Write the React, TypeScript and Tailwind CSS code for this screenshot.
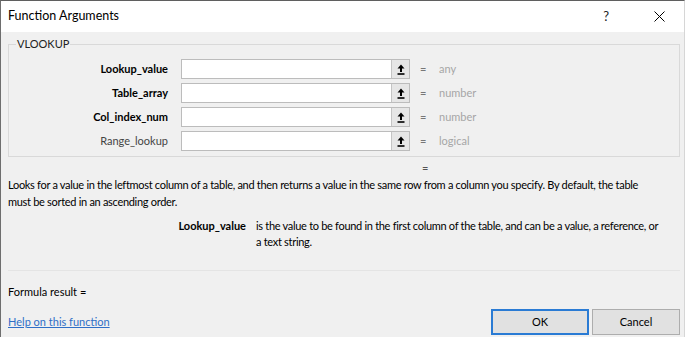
import { useState } from "react";

const args = [
  { name: "Lookup_value", type: "any", bold: true },
  { name: "Table_array", type: "number", bold: true },
  { name: "Col_index_num", type: "number", bold: true },
  { name: "Range_lookup", type: "logical", bold: false },
];

const RefIcon = () => (
  <svg width="8" height="11" viewBox="0 0 8 11">
    <path d="M4 0.5 L7.5 4.5 H5 V8 H3 V4.5 H0.5 Z" fill="#000" />
    <rect x="0.5" y="9.2" width="7" height="1.6" fill="#000" />
  </svg>
);

const ArgRow = ({ name, type, bold }: { name: string; type: string; bold: boolean }) => {
  const [value, setValue] = useState("");
  return (
    <div className="flex items-center h-[20px] mb-[4px]">
      <div
        className={`w-[159px] text-right ${bold ? "font-bold text-black" : "text-[#444]"}`}
      >
        {name}
      </div>
      <div className="ml-[13px] w-[229px] h-[20px] flex bg-white border border-[#bcbcbc]">
        <input
          value={value}
          onChange={(e) => setValue(e.target.value)}
          className="flex-1 min-w-0 outline-none px-1 text-[11px]"
        />
        <button className="w-[18px] h-full flex items-center justify-center bg-[#e6e6e6] border-l border-[#c4c4c4]">
          <RefIcon />
        </button>
      </div>
      <div className="ml-[10px] w-[7px] text-[#777]">=</div>
      <div className="ml-[12px] text-[#a6a6a6]">{type}</div>
    </div>
  );
};

export default function App() {
  return (
    <div
      className="w-[685px] h-[337px] flex flex-col bg-[#f0f0f0] border-t border-l border-r border-t-[#5f5f5f] border-l-[#6e6e6e] border-r-[#d6d6d6] text-[11px] text-black overflow-hidden"
      style={{ fontFamily: "Lato, 'Liberation Sans', sans-serif" }}
    >
      {/* title bar */}
      <div className="h-[31px] bg-white flex items-center pl-[7px] shrink-0">
        <span className="text-[12.5px]">Function Arguments</span>
        <span className="ml-auto mr-[45px] text-[13px] text-[#222]">?</span>
        <svg width="11" height="11" viewBox="0 0 11 11" className="mr-[19px]">
          <path d="M0.5 0.5 L10.5 10.5 M10.5 0.5 L0.5 10.5" stroke="#000" strokeWidth="1" />
        </svg>
      </div>

      <div className="flex-1 flex flex-col pl-[7px] pr-[2px]">
        <fieldset className="mt-[5px] border border-[#d9d9d9] pl-0 pb-[1px] mr-[2px]">
          <legend className="ml-[7px] px-[1px] leading-[14px] text-[#222]">VLOOKUP</legend>
          <div className="pt-[8px]">
            {args.map((a) => (
              <ArgRow key={a.name} {...a} />
            ))}
          </div>
        </fieldset>

        <div className="mt-[4px] leading-[14px] pl-[414px] text-[#555]">=</div>

        <p className="mt-[1px] leading-[17px] pr-[20px] tracking-[-0.3px]">
          Looks for a value in the leftmost column of a table, and then returns a value in the
          same row from a column you specify. By default, the table must be sorted in an
          ascending order.
        </p>

        <div className="mt-[8px] flex leading-[16px]">
          <div className="w-[238px] shrink-0 text-right font-bold">Lookup_value</div>
          <div className="ml-[10px] pr-[22px] tracking-[-0.3px]">
            is the value to be found in the first column of the table, and can be a value, a
            reference, or a text string.
          </div>
        </div>

        <div className="mt-auto border-t border-[#e4e4e4] pt-[14px] mr-[2px]">
          <div className="leading-[14px]">Formula result =</div>
          <div className="flex items-end mt-[10px] mb-[2px]">
            <a href="#" className="mb-[6px] leading-[14px] text-[#2f6fc7] underline">
              Help on this function
            </a>
            <button className="ml-auto w-[98px] h-[26px] bg-[#e1e1e1] border-2 border-[#2a7bd4] text-[11px]">
              OK
            </button>
            <button className="ml-[3px] w-[88px] h-[26px] bg-[#e1e1e1] border border-[#adadad] text-[11px]">
              Cancel
            </button>
          </div>
        </div>
      </div>
    </div>
  );
}
